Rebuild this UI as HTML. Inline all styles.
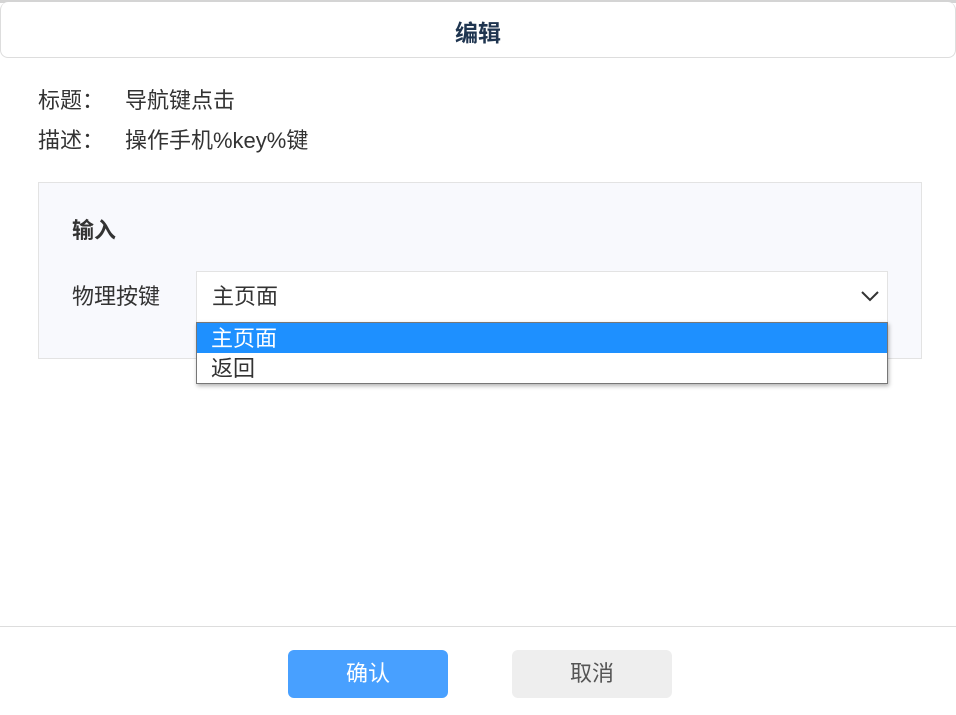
<!DOCTYPE html>
<html><head><meta charset="utf-8"><style>
*{margin:0;padding:0;box-sizing:border-box}
body{width:956px;height:715px;background:#fff;position:relative;overflow:hidden;font-family:"Liberation Sans","Noto Sans CJK SC",sans-serif;color:#333}
.topbar{position:absolute;left:0;top:0;width:956px;height:3px;background:#d4d4d4}
.head{position:absolute;left:0;top:2px;width:956px;height:56px;background:#fff;border:1px solid #ddd;border-top:none;border-radius:8px;text-align:center;line-height:62px;font-size:23px;font-weight:bold;color:#1f3550}
.t{position:absolute;font-size:22px;color:#333;line-height:26px}
.panel{position:absolute;left:38px;top:182px;width:884px;height:177px;background:#f8f9fd;border:1px solid #e3e3e3}
.sel{position:absolute;left:196px;top:271px;width:692px;height:52px;background:#fff;border:1px solid #e3e3e3;font-size:22px;line-height:50px;padding-left:15px}
.dd{position:absolute;left:196px;top:322px;width:692px;height:62px;background:#fff;border:1px solid #777;box-shadow:1px 2px 4px rgba(0,0,0,.3);font-size:22px}
.dd div{height:30px;line-height:31px;padding-left:14px}
.foot{position:absolute;left:0;top:626px;width:956px;height:1px;background:#ddd}
.btn{position:absolute;top:650px;width:160px;height:48px;border-radius:6px;text-align:center;line-height:48px;font-size:22px}
</style></head><body>
<div class="topbar"></div>
<div class="head">编辑</div>
<div class="t" style="left:38px;top:88px">标题：</div>
<div class="t" style="left:125px;top:88px">导航键点击</div>
<div class="t" style="left:38px;top:128px">描述：</div>
<div class="t" style="left:125px;top:128px">操作手机%key%键</div>
<div class="panel"></div>
<div class="t" style="left:72px;top:218px;font-weight:bold">输入</div>
<div class="t" style="left:72px;top:284px">物理按键</div>
<div class="sel">主页面
<svg style="position:absolute;right:8px;top:18px" width="18" height="12" viewBox="0 0 18 12"><path d="M1 2 L9 10 L17 2" fill="none" stroke="#333" stroke-width="2"/></svg></div>
<div class="dd"><div style="background:#1e90ff;color:#fff">主页面</div><div>返回</div></div>
<div class="foot"></div>
<div class="btn" style="left:288px;background:#48a0ff;color:#fff">确认</div>
<div class="btn" style="left:512px;background:#eee;color:#555">取消</div>
</body></html>
